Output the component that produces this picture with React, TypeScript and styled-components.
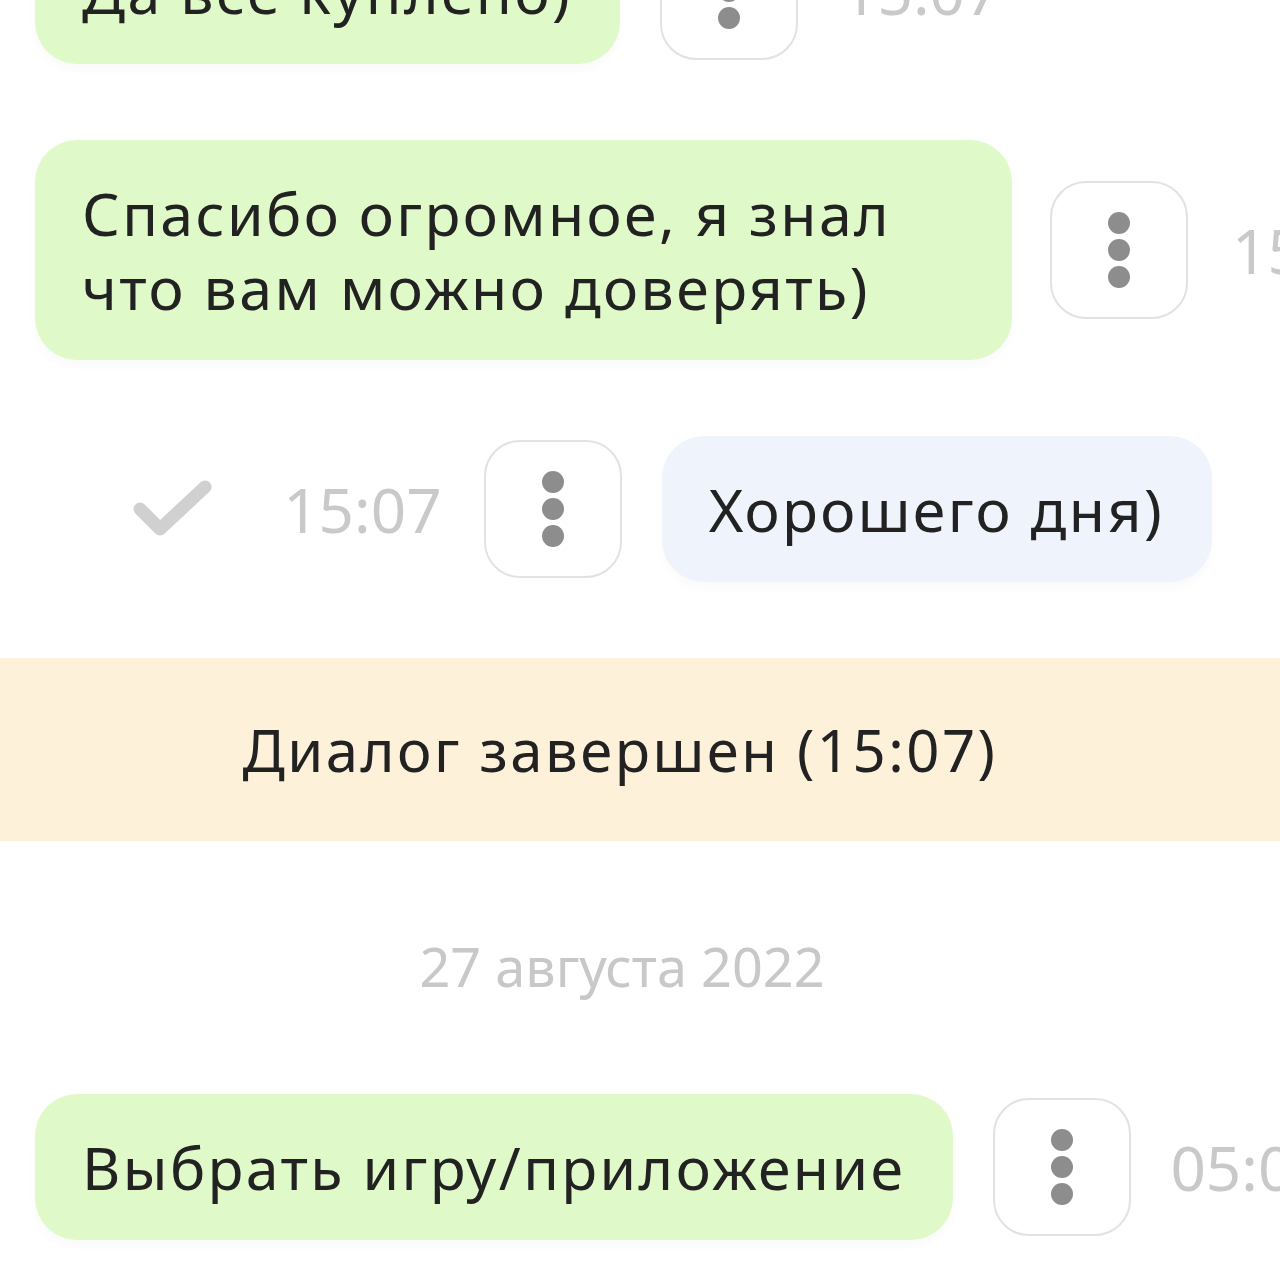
import React from 'react';
import styled, { createGlobalStyle } from 'styled-components';

const GlobalStyle = createGlobalStyle`
  html, body {
    margin: 0;
    padding: 0;
    background: #ffffff;
  }
  body {
    font-family: "Noto Sans", "Open Sans", sans-serif;
  }
`;

const Screen = styled.div`
  width: 1280px;
  height: 1280px;
  overflow: hidden;
  background: #ffffff;
`;

const Feed = styled.div`
  display: flex;
  flex-direction: column;
  margin-top: -82px;
`;

const Row = styled.div<{ $out?: boolean }>`
  display: flex;
  align-items: center;
  justify-content: ${(p) => (p.$out ? 'flex-end' : 'flex-start')};
  padding: ${(p) => (p.$out ? '0 68px 0 0' : '0 0 0 35px')};
  margin-bottom: 76px;
  white-space: nowrap;
`;

const Bubble = styled.div<{ $out?: boolean }>`
  flex: none;
  max-width: 882px;
  margin-left: ${(p) => (p.$out ? '40px' : '0')};
  padding: 36px 48px 36px 47px;
  border-radius: 42px;
  background: ${(p) => (p.$out ? '#eff4fc' : '#e0f9c9')};
  color: #222222;
  font-size: 59px;
  letter-spacing: 2.4px;
  line-height: 74px;
  white-space: normal;
  box-shadow: 0 6px 10px rgba(0, 0, 0, 0.025);
`;

const MenuButton = styled.div<{ $left: number }>`
  flex: none;
  box-sizing: border-box;
  width: 138px;
  height: 138px;
  margin-left: ${(p) => p.$left}px;
  border: 2px solid #e2e2e2;
  border-radius: 36px;
  display: flex;
  flex-direction: column;
  align-items: center;
  justify-content: center;
  gap: 5px;
  background: #ffffff;
`;

const Dot = styled.span`
  width: 22px;
  height: 22px;
  border-radius: 50%;
  background: #8d8d8d;
`;

const Time = styled.span<{ $left: number }>`
  flex: none;
  margin-left: ${(p) => p.$left}px;
  font-size: 62px;
  color: #c9c9c9;
`;

const Check = styled.svg`
  flex: none;
  width: 80px;
  height: 60px;
  margin-right: 70px;
`;

const Banner = styled.div`
  height: 183px;
  display: flex;
  align-items: center;
  justify-content: center;
  padding-right: 40px;
  background: #fdf1da;
  color: #222222;
  font-size: 58px;
  letter-spacing: 2.5px;
  margin-bottom: 88px;
`;

const DateLabel = styled.div`
  text-align: center;
  padding-right: 36px;
  font-size: 54px;
  line-height: 74px;
  color: #c8c8c8;
  margin-bottom: 91px;
`;

const Menu = ({ left }: { left: number }) => (
  <MenuButton $left={left}>
    <Dot />
    <Dot />
    <Dot />
  </MenuButton>
);

const App: React.FC = () => {
  return (
    <Screen>
      <GlobalStyle />
      <Feed>
        <Row>
          <Bubble>Да все куплено)</Bubble>
          <Menu left={40} />
          <Time $left={44}>15:07</Time>
        </Row>
        <Row>
          <Bubble>Спасибо огромное, я знал что вам можно доверять)</Bubble>
          <Menu left={38} />
          <Time $left={44}>15:07</Time>
        </Row>
        <Row $out>
          <Check viewBox="0 0 80 60">
            <path d="M7 30 L27 50 L72 8" fill="none" stroke="#d0d0d0" strokeWidth="13" strokeLinecap="round" strokeLinejoin="round" />
          </Check>
          <Time $left={0}>15:07</Time>
          <Menu left={42} />
          <Bubble $out>Хорошего дня)</Bubble>
        </Row>
        <Banner>Диалог завершен (15:07)</Banner>
        <DateLabel>27 августа 2022</DateLabel>
        <Row>
          <Bubble>Выбрать игру/приложение</Bubble>
          <Menu left={40} />
          <Time $left={39}>05:09</Time>
        </Row>
      </Feed>
    </Screen>
  );
};

export default App;
